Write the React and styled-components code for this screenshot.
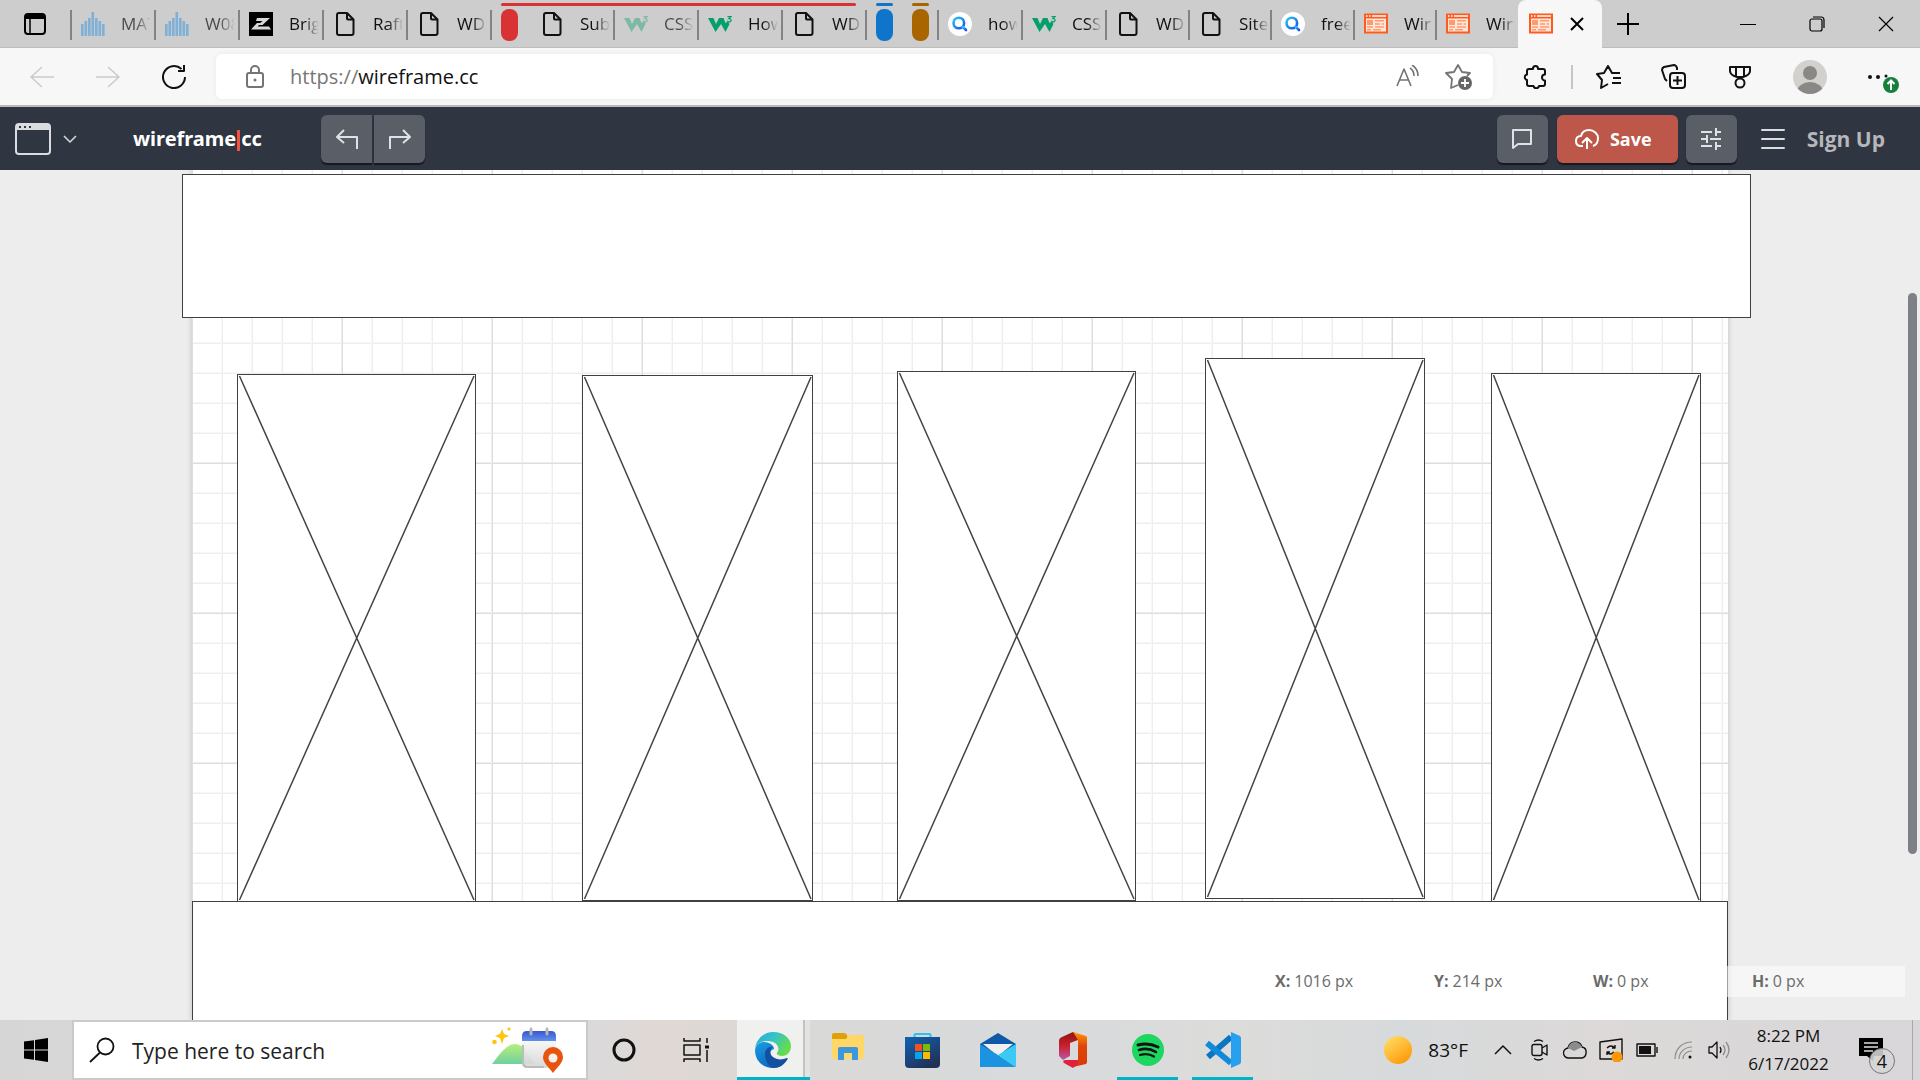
import React from "react";
import styled, { createGlobalStyle } from "styled-components";

const UI = `"Open Sans", "Noto Sans", sans-serif`;

const Global = createGlobalStyle`
  * { box-sizing: border-box; }
  html, body, #root { height: 100%; }
  body { margin: 0; font-family: ${UI}; overflow: hidden; background: #ededed; }
  button { font: inherit; color: inherit; border: 0; padding: 0; background: none; display: flex; align-items: center; justify-content: center; flex: none; }
  svg { display: block; flex: none; }
  h1 { margin: 0; }
`;

const Screen = styled.div`
  height: 100vh;
  display: flex;
  flex-direction: column;
`;

/* ---------- tab strip ---------- */
const TabStrip = styled.div`
  height: 48px;
  flex: none;
  display: flex;
  background: #cdcdcd;
  border-bottom: 1px solid #bdbdbd;
`;
const TabMenu = styled.button`
  width: 70px;
  height: 47px;
`;
const TabButton = styled.button`
  width: ${(p) => p.$w || 84}px;
  height: 47px;
  position: relative;
  justify-content: flex-start;
  gap: 16px;
  padding-left: ${(p) => (p.$bare ? 9 : 11)}px;
  color: #111;
  &::before {
    content: "";
    display: ${(p) => (p.$bare ? "none" : "block")};
    position: absolute;
    left: 0;
    top: 10px;
    width: 2px;
    height: 30px;
    background: #838383;
  }
`;
const TabLabel = styled.span`
  width: 30px;
  overflow: hidden;
  white-space: nowrap;
  text-align: left;
  font-size: 17px;
  line-height: 24px;
  opacity: ${(p) => (p.$dim ? 0.7 : 1)};
  mask-image: linear-gradient(to right, #000 50%, transparent 100%);
`;
const Group = styled.div`
  display: flex;
  position: relative;
  padding-left: 11px;
  &::before {
    content: "";
    position: absolute;
    left: 11px;
    right: ${(p) => p.$end || 0}px;
    top: 3px;
    height: 3px;
    border-radius: 2px;
    background: ${(p) => p.$color};
  }
  &::after {
    content: "";
    display: ${(p) => (p.$sep ? "block" : "none")};
    position: absolute;
    left: 0;
    top: 10px;
    width: 2px;
    height: 30px;
    background: #838383;
  }
`;
const Pill = styled.button`
  width: 17px;
  height: 32px;
  margin-top: 9px;
  margin-right: ${(p) => p.$gap}px;
  border-radius: 8px;
  background: ${(p) => p.$color};
`;
const ActiveTab = styled.div`
  width: 84px;
  height: 48px;
  flex: none;
  display: flex;
  align-items: center;
  gap: 17px;
  padding-left: 11px;
  border-radius: 8px 8px 0 0;
  background: #f7f7f7;
`;
const NewTab = styled.button`
  width: 52px;
  height: 47px;
`;
const WindowButtons = styled.div`
  display: flex;
  margin-left: auto;
`;
const WindowButton = styled.button`
  width: 69px;
  height: 47px;
`;

/* ---------- address bar ---------- */
const Toolbar = styled.div`
  height: 59px;
  flex: none;
  display: flex;
  align-items: center;
  background: #f7f7f7;
  border-bottom: 2px solid #b9b9b9;
`;
const NavButton = styled.button`
  width: 66px;
  height: 48px;
  color: ${(p) => (p.$off ? "#cacaca" : "#111")};
`;
const NavGroup = styled.div`
  display: flex;
  flex: none;
  padding: 0 9px;
`;
const AddressBar = styled.div`
  flex: 1;
  height: 45px;
  display: flex;
  align-items: center;
  padding: 0 21px 0 29px;
  gap: 25px;
  border-radius: 6px;
  background: #fff;
  box-shadow: 0 0 6px rgba(0, 0, 0, 0.06);
  color: #747474;
`;
const Url = styled.a`
  flex: 1;
  color: #111;
  font-size: 20px;
  line-height: 28px;
  text-decoration: none;
  span { color: #767676; }
`;
const ToolGroup = styled.div`
  display: flex;
  align-items: center;
  flex: none;
  padding-left: 9px;
  color: #111;
`;
const ToolButton = styled.button`
  width: ${(p) => p.$w || 66}px;
  height: 48px;
`;
const ToolDivider = styled.i`
  width: 2px;
  height: 24px;
  margin: 0 2px 0 3px;
  background: #c6c6c6;
`;

/* ---------- application header ---------- */
const AppHeader = styled.header`
  height: 63px;
  flex: none;
  display: flex;
  align-items: center;
  justify-content: space-between;
  padding: 0 35px 0 15px;
  background: #2f3541;
`;
const Cluster = styled.div`
  display: flex;
  align-items: center;
`;
const WindowMenu = styled.button`
  gap: 12px;
  color: #dadce0;
`;
const Logo = styled.h1`
  width: 188px;
  margin-left: 56px;
  font-size: 20px;
  line-height: 30px;
  font-weight: 700;
  font-family: "Noto Sans", ${UI};
  font-stretch: normal;
  color: #fff;
  display: flex;
  align-items: center;
`;
const Caret = styled.i`
  width: 3px;
  height: 21px;
  margin: 3px 1px 0 1px;
  background: #f0533e;
`;
const HeaderButton = styled.button`
  width: ${(p) => p.$w || 51}px;
  height: 48px;
  gap: 11px;
  margin-left: ${(p) => p.$gap || 0}px;
  padding-right: ${(p) => (p.$primary ? 8 : 0)}px;
  border-radius: ${(p) => p.$radius || "6px"};
  background: ${(p) => (p.$primary ? "#bd5749" : "#5a5e67")};
  box-shadow: 0 2px 1px #16191f;
  color: ${(p) => (p.$primary ? "#fff" : "#e0e1e4")};
  font-size: 18px;
  font-weight: 700;
  line-height: 24px;
`;
const Burger = styled.button`
  width: 24px;
  margin-left: 24px;
  color: #dcdde0;
`;
const SignUp = styled.a`
  margin-left: 22px;
  font-size: 21px;
  line-height: 30px;
  font-weight: 700;
  color: #b6b7ba;
  text-decoration: none;
`;

/* ---------- canvas ---------- */
const Viewport = styled.main`
  flex: 1;
  min-height: 0;
  position: relative;
  overflow: hidden;
  background: #ededed;
`;
const Sheet = styled.div`
  position: relative;
  width: 80%;
  height: 100%;
  margin: 0 auto;
  background-color: #fff;
  box-shadow: 0 0 6px rgba(0, 0, 0, 0.2);
  background-image:
    linear-gradient(to right, #eee 1px, #dedede 1px, #dedede 2px, transparent 2px),
    linear-gradient(to bottom, #eee 1px, #dedede 1px, #dedede 2px, transparent 2px),
    linear-gradient(to right, #f7f7f7 1px, #eee 1px, #eee 2px, transparent 2px),
    linear-gradient(to bottom, #f7f7f7 1px, #eee 1px, #eee 2px, transparent 2px);
  background-size: 150px 150px, 150px 150px, 30px 30px, 30px 30px;
  background-position: -1px -8px;
`;
const Shape = styled.div`
  position: absolute;
  left: ${(p) => p.$x}px;
  top: ${(p) => p.$y}px;
  width: ${(p) => p.$w}px;
  height: ${(p) => p.$h}px;
  border: 1px solid #404040;
  background: #fff;
  svg { width: 100%; height: 100%; }
`;
const Scrollbar = styled.div`
  position: absolute;
  right: 3px;
  top: 123px;
  width: 9px;
  height: 561px;
  border-radius: 5px;
  background: #7d8087;
`;
const Readout = styled.dl`
  position: absolute;
  right: 15px;
  bottom: 23px;
  margin: 0;
  display: flex;
  background: rgba(255, 255, 255, 0.5);
`;
const Reading = styled.div`
  width: 159px;
  height: 31px;
  display: flex;
  gap: 4px;
  padding-left: 5px;
  font-size: 16px;
  line-height: 30px;
  color: #6b6b6b;
  &:last-child { width: 158px; }
  dt { font-weight: 700; }
  dd { margin: 0; }
`;

/* ---------- taskbar ---------- */
const Taskbar = styled.footer`
  height: 60px;
  flex: none;
  display: flex;
  background: linear-gradient(to right, #d6d6d6 0, #dadada 590px, #e0d8d5 660px, #d9d9d7 830px, #d8dadc 1050px, #dcdcda 1230px, #d7dadc 1400px, #dcd9d8 1600px, #d8d6d9 100%);
  color: #111;
`;
const Start = styled.button`
  width: 72px;
  height: 60px;
`;
const Search = styled.label`
  width: 516px;
  height: 60px;
  flex: none;
  display: flex;
  align-items: center;
  padding: 0 22px 0 15px;
  gap: 17px;
  border: 2px solid #cacaca;
  background: #fff;
  input {
    flex: 1;
    min-width: 0;
    border: 0;
    padding: 2px 0 0;
    outline: 0;
    background: none;
    font: 21px/30px ${UI};
    color: #222;
  }
  input::placeholder { color: #222; opacity: 1; }
`;
const Task = styled.button`
  width: ${(p) => p.$w || 75}px;
  height: 60px;
  position: relative;
  margin-left: ${(p) => (p.$active ? 5 : 0)}px;
  background: ${(p) => (p.$active ? "linear-gradient(to right, #f0f0ef 66px, #c3c3c2 66px, #c3c3c2 68px, #e3e3e2 68px)" : "none")};
  padding-right: ${(p) => (p.$active ? 2 : 0)}px;
  &::after {
    content: "";
    display: ${(p) => (p.$running ? "block" : "none")};
    position: absolute;
    left: ${(p) => (p.$active ? 0 : 7)}px;
    right: ${(p) => (p.$active ? 0 : 7)}px;
    bottom: 0;
    height: 3px;
    background: #00b3c6;
  }
`;
const Tray = styled.div`
  display: flex;
  align-items: center;
  margin-left: auto;
  padding-right: 7px;
`;
const Weather = styled.button`
  gap: 16px;
  margin-right: 17px;
  font-size: 19px;
  line-height: 26px;
`;
const TrayButton = styled.button`
  width: 36px;
  height: 60px;
`;
const Clock = styled.time`
  width: 103px;
  text-align: center;
  font-size: 17px;
  line-height: 28px;
`;
const Notify = styled.button`
  width: 72px;
  height: 60px;
  position: relative;
  padding-right: 10px;
`;
const Badge = styled.span`
  position: absolute;
  left: 29px;
  top: 28px;
  width: 26px;
  height: 26px;
  border: 1px solid #777;
  border-radius: 50%;
  background: rgba(214, 214, 214, 0.88);
  font-size: 18px;
  line-height: 24px;
`;
const ShowDesktop = styled.i`
  width: 1px;
  height: 60px;
  background: #a9a9a9;
`;

/* ---------- icons ---------- */
const Line = ({ w = 24, h = w, sw = 2, children }) => (
  <svg width={w} height={h} viewBox={`0 0 ${w} ${h}`} fill="none" stroke="currentColor" strokeWidth={sw} strokeLinejoin="round" aria-hidden="true">
    {children}
  </svg>
);

const Bars = () => (
  <svg width="24" height="24" fill="#7fb0d6">
    {[[0, 12], [3.5, 9], [7, 6], [10.5, 0], [14, 6], [17.5, 9], [21, 12]].map(([x, y]) => (
      <rect key={x} x={x} y={y} width="2.6" height={24 - y} />
    ))}
  </svg>
);
const Bright = () => (
  <svg width="24" height="24">
    <path fill="#000" d="M0 0h24v24H0z" />
    <path fill="#d8d8d8" d="M8 6h13l-7.500 7H9l4.500-4H7zM2 17.500L8 11h4l-3.500 3.500H20l2 3z" />
  </svg>
);
const Doc = () => (
  <Line>
    <path d="M5.500 1H14l6.500 6.500V21a2 2 0 0 1-2 2H6a2 2 0 0 1-2-2V3a2 2 0 0 1 2-2z" />
    <path d="M14 1v5.500a1 1 0 0 0 1 1h5.500" />
  </Line>
);
const W3 = ({ dim }) => (
  <svg width="24" height="24" opacity={dim ? 0.4 : 1}>
    <path fill="#04a06b" d="M0 6H5.500L8 12L11 6H15.500L17.500 11L20 9.500L21.500 12L17.500 20L13 12L7.500 20Z" />
    <path fill="none" stroke="#04a06b" strokeWidth="1.300" d="M19.500 4.600H23l-2 2c3 0 2.500 3.400 0 3.200-.8 0-1.300-.3-1.700-.8" />
  </svg>
);
const Bing = () => (
  <svg width="24" height="24">
    <defs>
      <linearGradient id="bing" x2="1" y2="1"><stop stopColor="#28c8f5" /><stop offset="1" stopColor="#1a50e8" /></linearGradient>
    </defs>
    <circle cx="12" cy="12" r="12" fill="#fff" />
    <g fill="none" stroke="url(#bing)" strokeWidth="2.600" strokeLinecap="round"><circle cx="10.800" cy="11" r="5.300" /><path d="M14.800 15l3.200 3" /></g>
  </svg>
);
const Wire = () => (
  <svg width="24" height="24">
    <path fill="#ff5a1f" d="M0 1.500h24v20H0z" />
    <path fill="#ffe7dc" d="M2 6.500h20v13H2z" />
    <path stroke="#fff" strokeWidth="1.400" d="M2 4h1.500M5 4h1.500M8 4h14" />
    <path fill="#ff9a6c" d="M3 8h6v5H3z" />
    <path stroke="#ff9a6c" strokeWidth="1.400" d="M11 8.700h9M11 12h5M17.500 12H20M3 15h6M11 15h9M3 17.800h4M9 17.800h8" />
  </svg>
);
const Chevron = () => <Line w={14} h={8} sw={1.5}><path d="M1 1l6 6 6-6" /></Line>;

const ICONS = { bars: <Bars />, bright: <Bright />, doc: <Doc />, w3: <W3 />, w3dim: <W3 dim />, bing: <Bing />, wire: <Wire /> };

const Tab = ({ icon, label, ...rest }) => (
  <TabButton {...rest}>
    {ICONS[icon]}
    <TabLabel $dim={icon === "w3dim" || icon === "bars"}>{label}</TabLabel>
  </TabButton>
);

const firstTabs = [["bars", "MAT"], ["bars", "W08"], ["bright", "Brig"], ["doc", "Raft"], ["doc", "WD"]];
const groupTabs = [["w3dim", "CSS"], ["w3", "How"], ["doc", "WD"]];
const lastTabs = [["bing", "how", 84], ["w3", "CSS", 84], ["doc", "WD", 83], ["doc", "Site", 82], ["bing", "free", 83], ["wire", "Wir", 82], ["wire", "Wir", 83]];

const boxes = [
  { x: 45, y: 204, w: 239, h: 528 },
  { x: 390, y: 205, w: 231, h: 526 },
  { x: 705, y: 201, w: 239, h: 530 },
  { x: 1013, y: 188, w: 220, h: 541 },
  { x: 1299, y: 203, w: 210, h: 529 },
];

const Crossed = ({ x, y, w, h }) => (
  <Shape $x={x} $y={y} $w={w} $h={h}>
    <svg viewBox={`0 0 ${w} ${h}`} preserveAspectRatio="none" stroke="#444" strokeWidth="1.500">
      <path d={`M1.500 1L${w - 1} ${h - 1}M${w - 1} 1L1.500 ${h - 1}`} />
    </svg>
  </Shape>
);

const readings = [["X:", "1016 px"], ["Y:", "214 px"], ["W:", "0 px"], ["H:", "0 px"]];

const Highlights = () => (
  <svg width="72" height="46" aria-hidden="true">
    <defs>
      <linearGradient id="hill" x2="0" y2="1"><stop stopColor="#b8ee7c" /><stop offset="1" stopColor="#6fd0a0" /></linearGradient>
      <linearGradient id="cal" x2="0" y2="1"><stop stopColor="#3a55d0" /><stop offset="1" stopColor="#5f93ea" /></linearGradient>
      <linearGradient id="page" x2="0" y2="1"><stop stopColor="#f6f6f6" /><stop offset="1" stopColor="#d5d5d5" /></linearGradient>
    </defs>
    <path fill="url(#hill)" d="M0 37C8 26 15 17 23 17c9 0 14 11 20 20z" />
    <path fill="url(#page)" d="M30 14h34v27H35q-5 0-5-5z" opacity=".92" />
    <path fill="none" stroke="#bcbcbc" strokeWidth="2" d="M31 18v17q0 5 5 5h16" />
    <path fill="url(#cal)" d="M30 14V9q0-5 5-5h24q5 0 5 5v5z" />
    <path stroke="#b5b5b5" strokeWidth="3" strokeLinecap="round" d="M39 2v5M55 2v5" />
    <path fill="#fdc60a" d="M10 2l2 5 5 2-5 2-2 6-2-6-5-2 5-2z" />
    <circle cx="2.500" cy="15" r="2.300" fill="#fdc60a" /><circle cx="17" cy="2" r="1.600" fill="#fdc60a" />
    <path fill="#e8530e" d="M61 46C56 39 51 36 51 30a10 10 0 0 1 20 0c0 6-5 9-10 16z" />
    <circle cx="61" cy="31" r="4.500" fill="#f4f1ef" />
  </svg>
);

const Edge = () => (
  <svg width="36" height="36" aria-hidden="true">
    <defs>
      <linearGradient id="e1" x2="1" y2=".5"><stop stopColor="#2aa8de" /><stop offset=".5" stopColor="#35c3c8" /><stop offset="1" stopColor="#66dd4a" /></linearGradient>
      <linearGradient id="e2" x2=".6" y2="1"><stop stopColor="#1b9de2" /><stop offset="1" stopColor="#0b63c0" /></linearGradient>
    </defs>
    <path fill="url(#e2)" d="M0 18C1 12 5 10 9 10c5 0 10 3 10 7-4 1-5 5-3 8 3 4 10 5 16 2-3 6-8 9-14 9C7 36 0 28 0 18z" />
    <path fill="#1250a0" d="M10 22c0-5 4-8 8-7-4 2-3 8 0 10 4 3 9 3 14 1 1 0 1 1 0 2-3 5-8 8-14 8-5-2-8-8-8-14z" />
    <path fill="url(#e1)" d="M0 17C1 7 9 0 18 0c10 0 18 6 18 14 0 6-4 10-9 10-4 0-6-2-5-3 1-2 2-3 1-6-1-4-6-6-11-6C6 9 1 12 0 17z" />
  </svg>
);
const Folder = () => (
  <svg width="32" height="34" aria-hidden="true">
    <path fill="#e0a106" d="M0 2q0-2 2-2h10q2 0 3 2l1 4H0z" />
    <path fill="#ffd766" d="M0 6h14l3-4h15v23q0 1-1 1H1q-1 0-1-1z" />
    <path fill="#3e97dc" d="M6 26V16q0-2 2-2h16q2 0 2 2v11h-6v-7h-8v7H6z" />
  </svg>
);
const Store = () => (
  <svg width="36" height="36" aria-hidden="true">
    <defs><linearGradient id="st" x2=".6" y2="1"><stop stopColor="#0f63b5" /><stop offset="1" stopColor="#213256" /></linearGradient></defs>
    <path fill="none" stroke="#2cc0f5" strokeWidth="2" d="M9.500 7V3q0-1 1-1h14q1 0 1 1v4" />
    <path fill="url(#st)" d="M0 5h35v27q0 4-4 4H4q-4 0-4-4z" />
    <path fill="#f25022" d="M10 12h7v7h-7z" /><path fill="#7fba00" d="M18 12h7v7h-7z" />
    <path fill="#00a4ef" d="M10 20h7v7h-7z" /><path fill="#ffb900" d="M18 20h7v7h-7z" />
  </svg>
);
const Mail = () => (
  <svg width="36" height="34" aria-hidden="true">
    <path fill="#0f5aa8" d="M0 11L18 0l18 11v8H0z" />
    <path fill="#f0f0f0" d="M3 11h30L18 23z" />
    <path fill="#1c93e0" d="M0 11l18 11L36 34H0z" />
    <path fill="#3bc9f6" d="M36 11v23L18 22z" />
  </svg>
);
const Office = () => (
  <svg width="28" height="36" aria-hidden="true">
    <defs>
      <linearGradient id="of" x2="0" y2="1"><stop stopColor="#ff9a00" /><stop offset=".4" stopColor="#e0450a" /><stop offset="1" stopColor="#d93a06" /></linearGradient>
      <linearGradient id="ol" x2="0" y2="1"><stop stopColor="#8f1510" /><stop offset=".5" stopColor="#c9202e" /><stop offset="1" stopColor="#b85aa8" /></linearGradient>
    </defs>
    <path fill="url(#ol)" d="M14 0l5 3v5l-8 3v13l-7 4-4-4V9q0-3 3-4z" />
    <path fill="url(#of)" d="M14 0l13 4q1 0 1 2v24q0 1-1 2l-13 3 5-4V8l-5-8z" />
    <path fill="#e0203c" d="M6 28h13v4l-5 4-9-5q-2-2 1-3z" />
  </svg>
);
const Spotify = () => (
  <svg width="32" height="32" aria-hidden="true">
    <circle cx="16" cy="16" r="16" fill="#1ed760" />
    <g fill="none" stroke="#141414" strokeLinecap="round"><path strokeWidth="3" d="M6 11c7-2 14-1 20 2" /><path strokeWidth="2.600" d="M7 16c6-2 12-1 17 2" /><path strokeWidth="2.200" d="M8 21c5-1.500 10-1 14 1.500" /></g>
  </svg>
);
const Code = () => (
  <svg width="36" height="36" aria-hidden="true">
    <path fill="none" stroke="#0a76c2" strokeWidth="6" strokeLinejoin="round" d="M3 25L26 5" />
    <path fill="none" stroke="#108bdb" strokeWidth="6" strokeLinejoin="round" d="M2 11l24 20" />
    <path fill="#27a0ef" d="M26 0l9 4q1 1 1 2v24q0 1-1 2l-9 4z" />
  </svg>
);

export default function App() {
  return (
    <Screen>
      <Global />
      <TabStrip>
        <TabMenu aria-label="Tab actions">
          <Line w={22}><rect x="1" y="1" width="20" height="20" rx="3" /><path d="M2 4h18" strokeWidth="4" /><path d="M6 5v16" strokeWidth="1.500" /></Line>
        </TabMenu>
        {firstTabs.map(([icon, label], i) => <Tab key={i} icon={icon} label={label} />)}
        <Group $color="#d93234" $end={9} $sep>
          <Pill $color="#d93234" $gap={13} aria-label="Tab group" />
          <Tab icon="doc" label="Sub" $w={82} $bare />
          {groupTabs.map(([icon, label], i) => <Tab key={i} icon={icon} label={label} />)}
        </Group>
        <Group $color="#0f75cb" $sep $end={8}><Pill $color="#0f75cb" $gap={8} aria-label="Tab group" /></Group>
        <Group $color="#a86500" $end={8}><Pill $color="#a86500" $gap={8} aria-label="Tab group" /></Group>
        {lastTabs.map(([icon, label, w], i) => <Tab key={i} icon={icon} label={label} $w={w} />)}
        <ActiveTab>
          <Wire />
          <button aria-label="Close tab"><Line w={14}><path d="M1 1l12 12M13 1L1 13" /></Line></button>
        </ActiveTab>
        <NewTab aria-label="New tab"><Line w={22}><path d="M11 0v22M0 11h22" /></Line></NewTab>
        <WindowButtons>
          <WindowButton aria-label="Minimize"><Line w={16} sw={1}><path d="M0 8.500h16" /></Line></WindowButton>
          <WindowButton aria-label="Restore"><Line w={16} sw={1.2}><rect x="1" y="3" width="12" height="12" rx="2" /><path d="M4 1h8a3 3 0 0 1 3 3v8" /></Line></WindowButton>
          <WindowButton aria-label="Close"><Line w={16} sw={1.2}><path d="M1 1l14 14M15 1L1 15" /></Line></WindowButton>
        </WindowButtons>
      </TabStrip>

      <Toolbar>
        <NavGroup>
          <NavButton $off aria-label="Back"><Line sw={1.5}><path d="M24 12H1M12 2L1 12l11 10" /></Line></NavButton>
          <NavButton $off aria-label="Forward"><Line sw={1.5}><path d="M0 12h23M12 2l11 10-11 10" /></Line></NavButton>
          <NavButton aria-label="Refresh"><Line><path d="M23 12a11 11 0 1 1-3.500-8M22 0v6h-6" /></Line></NavButton>
        </NavGroup>
        <AddressBar>
          <Line w={20} h={24}><rect x="2" y="8" width="16" height="14" rx="2" /><path d="M6 8V5a4 4 0 0 1 8 0v3" /><circle cx="10" cy="15" r="1.500" fill="currentColor" stroke="none" /></Line>
          <Url href="#"><span>https://</span>wireframe.cc</Url>
          <button aria-label="Read aloud"><Line sw={1.6}><path d="M1 21L8 4l7 17M4 15h8M14 3c3 2 4 5 4 8M16 0c5 3 6 7 6 11" /></Line></button>
          <button aria-label="Add to favorites">
            <Line w={27} h={26} sw={1.8}><path d="M13 21l-7 3 1-9-6-6 8-1 4-7 4 7 8 1-3 3" /><circle cx="20" cy="19" r="7" fill="#666" stroke="none" /><path stroke="#fff" d="M16 19h8M20 15v8" /></Line>
          </button>
        </AddressBar>
        <ToolGroup>
          <ToolButton aria-label="Extensions"><Line><path d="M6 4h4v-.5a2.500 2.500 0 0 1 5 0V4h5q2 0 2 2v3.500a3 3 0 0 0 0 6V19q0 2-2 2h-4a2.800 2.800 0 0 1-5.500 0H6q-2 0-2-2v-4a2.800 2.800 0 0 1 0-5.500V6q0-2 2-2z" /></Line></ToolButton>
          <ToolDivider />
          <ToolButton aria-label="Favorites"><Line w={25} h={24}><path d="M12 19l-7 4 1-8-5-6 7-1 4-7 4 7h8M17 13h8M16 18h9" /></Line></ToolButton>
          <ToolButton aria-label="Collections"><Line w={26}><rect x="9" y="9" width="15" height="15" rx="3" /><path d="M16.500 12v9M12 16.500h9M6 17L4 15 1 6q0-2 2-3l10-2q2 0 3 3v2" /></Line></ToolButton>
          <ToolButton aria-label="Rewards"><Line w={22} h={24}><path d="M1 2h20v4q0 4-7 6h-6Q1 10 1 6zM7 2v9M15 2v9" /><circle cx="11" cy="18" r="4.500" /></Line></ToolButton>
          <ToolButton $w={73} aria-label="Profile">
            <svg width="34" height="34"><defs><clipPath id="av"><circle cx="17" cy="17" r="17" /></clipPath></defs><g clipPath="url(#av)"><path fill="#d2d1ce" d="M0 0h34v34H0z" /><circle cx="17" cy="13" r="7" fill="#8a8885" /><ellipse cx="17" cy="32" rx="13" ry="10" fill="#8a8885" /></g></svg>
          </ToolButton>
          <ToolButton $w={74} aria-label="Settings and more">
            <svg width="32" height="32"><g fill="#111"><circle cx="3" cy="16" r="2" /><circle cx="11" cy="16" r="2" /><circle cx="19" cy="15" r="1.500" /></g><circle cx="24" cy="24" r="8" fill="#15803a" /><path stroke="#fff" strokeWidth="2" fill="none" d="M24 29V20M20.500 23l3.500-3.500 3.500 3.500" /></svg>
          </ToolButton>
        </ToolGroup>
      </Toolbar>

      <AppHeader>
        <Cluster>
          <WindowMenu aria-label="Choose template">
            <Line w={36} h={32}><rect x="1" y="1" width="34" height="30" rx="3" /><path d="M1 4h34" strokeWidth="6" /><path stroke="#2f3541" strokeDasharray="2 3" d="M4 4h14" /></Line>
            <Chevron />
          </WindowMenu>
          <Logo>wireframe<Caret />cc</Logo>
          <HeaderButton $radius="6px 0 0 6px" aria-label="Undo"><Line w={22} h={20}><path d="M8 1L1 8l7 6M1 8h20v12" /></Line></HeaderButton>
          <HeaderButton $radius="0 6px 6px 0" $gap={2} aria-label="Redo"><Line w={22} h={20}><path d="M14 1l7 7-7 6M21 8H1v12" /></Line></HeaderButton>
        </Cluster>
        <Cluster>
          <HeaderButton aria-label="Comments"><Line w={22}><path d="M2 2h18v14H7l-5 4z" /></Line></HeaderButton>
          <HeaderButton $primary $w={121} $gap={9}>
            <Line w={24} h={20}><path d="M8 17H6C3 17 1 15 1 12s2-5 5-5c1-4 4-6 8-6 5 0 9 4 9 8s-2 7-5 8M12 20V9M7 14l5-5 5 5" /></Line>
            Save
          </HeaderButton>
          <HeaderButton $gap={8} aria-label="Settings"><Line w={20} h={22}><path d="M0 4h11M15 4h5M15 0v8M0 11h5M9 11h11M6 7v8M0 18h11M15 18h5M15 14v8" /></Line></HeaderButton>
          <Burger aria-label="Menu"><Line w={24} h={20}><path d="M1 1h22M1 10h22M1 19h22" strokeLinecap="round" /></Line></Burger>
          <SignUp href="#">Sign Up</SignUp>
        </Cluster>
      </AppHeader>

      <Viewport>
        <Sheet>
          <Shape $x={-10} $y={4} $w={1569} $h={144} />
          {boxes.map((b) => <Crossed key={b.x} {...b} />)}
          <Shape $x={0} $y={731} $w={1536} $h={260} />
        </Sheet>
        <Readout>
          {readings.map(([k, v]) => <Reading key={k}><dt>{k}</dt><dd>{v}</dd></Reading>)}
        </Readout>
        <Scrollbar />
      </Viewport>

      <Taskbar>
        <Start aria-label="Start"><svg width="24" height="24"><path d="M0 3.500l10-1.300V11.500H0zM11 2l13-2v11.500H11zM0 12.500h10v9.300L0 20.500zM11 12.500h13V24l-13-2z" /></svg></Start>
        <Search>
          <Line w={26} h={26} sw={1.8}><circle cx="16.500" cy="9.500" r="8" /><path d="M11 15.500L1 25" /></Line>
          <input aria-label="Search" placeholder="Type here to search" />
          <Highlights />
        </Search>
        <Task $w={72} aria-label="Cortana"><Line w={24} sw={3}><circle cx="12" cy="12" r="10" /></Line></Task>
        <Task $w={72} aria-label="Task view"><Line w={26} h={24} sw={1.5}><path d="M1 0v3h16V0M1 24v-3h16v3M1 7h16v10H1zM24 0v5M24 12v12" /><path d="M22 9h4" strokeWidth="3" /></Line></Task>
        <Task $w={73} $active $running aria-label="Edge"><Edge /></Task>
        <Task aria-label="File Explorer"><Folder /></Task>
        <Task aria-label="Microsoft Store"><Store /></Task>
        <Task aria-label="Mail"><Mail /></Task>
        <Task aria-label="Office"><Office /></Task>
        <Task $running aria-label="Spotify"><Spotify /></Task>
        <Task $running aria-label="Visual Studio Code"><Code /></Task>
        <Tray>
          <Weather>
            <svg width="28" height="28"><defs><linearGradient id="sun" x2=".7" y2="1"><stop stopColor="#ffe26a" /><stop offset="1" stopColor="#ff9a0a" /></linearGradient></defs><circle cx="14" cy="14" r="14" fill="url(#sun)" /></svg>
            83°F
          </Weather>
          <TrayButton aria-label="Hidden icons"><Line w={18} h={10} sw={1.5}><path d="M1 9l8-8 8 8" /></Line></TrayButton>
          <TrayButton aria-label="Meet now"><Line w={17} h={22} sw={1.4}><rect x="1" y="5.500" width="10" height="11" rx="2" /><path d="M11 9l5-3v10l-5-3M3 2.500q4.500-3 9 0M3 19.500q4.500 3 9 0" /></Line></TrayButton>
          <TrayButton aria-label="OneDrive"><Line w={24} h={18} sw={1.4}><path fill="#d9d9d9" d="M6 17a5 5 0 0 1-1-10C6 3 9 1 12 1s6 2 7 5c6 1 5 10 0 11z" /><path fill="#8c8c8c" stroke="none" d="M5 7c1-4 4-6 7-6s6 2 7 5l-8 4z" /></Line></TrayButton>
          <TrayButton aria-label="Windows Update"><Line w={24} h={24} sw={1.4}><path d="M1 4l22-3v20L1 21zM8 10q4-4 8 0M16 7v3h-3M15 14q-4 4-7 0M8 17v-3h3" /><circle cx="18" cy="19" r="5.500" fill="#ff9800" stroke="none" /></Line></TrayButton>
          <TrayButton aria-label="Battery"><Line w={22} h={14} sw={1.4}><path d="M1 1h18v12H1zM21 4v6" /><path fill="currentColor" stroke="none" d="M3 3h12v8H3z" /></Line></TrayButton>
          <TrayButton aria-label="Network"><Line w={18} h={18} sw={1.2}><g stroke="#8d8d8d"><path d="M1 18C1 8 8 1 18 1M5 18c0-7 6-12 13-12M9 18c0-5 4-8 9-8" /></g><circle cx="16" cy="16" r="1.500" fill="currentColor" stroke="none" /></Line></TrayButton>
          <TrayButton aria-label="Volume"><Line w={23} h={20} sw={1.3}><path d="M1 7h3l5-5v16l-5-5H1zM12 7q2 3 0 6" /><g stroke="#8d8d8d"><path d="M15 5q4 5 0 10M18 2q6 8 0 16" /></g></Line></TrayButton>
          <Clock>8:22 PM<br />6/17/2022</Clock>
          <Notify aria-label="Notifications">
            <svg width="24" height="24"><path d="M0 0h24v18h-9l-1 5-6-5H0z" /><path stroke="#ddd" strokeWidth="1.500" d="M5 5h14M5 9h14M5 13h9" /></svg>
            <Badge>4</Badge>
          </Notify>
          <ShowDesktop />
        </Tray>
      </Taskbar>
    </Screen>
  );
}
